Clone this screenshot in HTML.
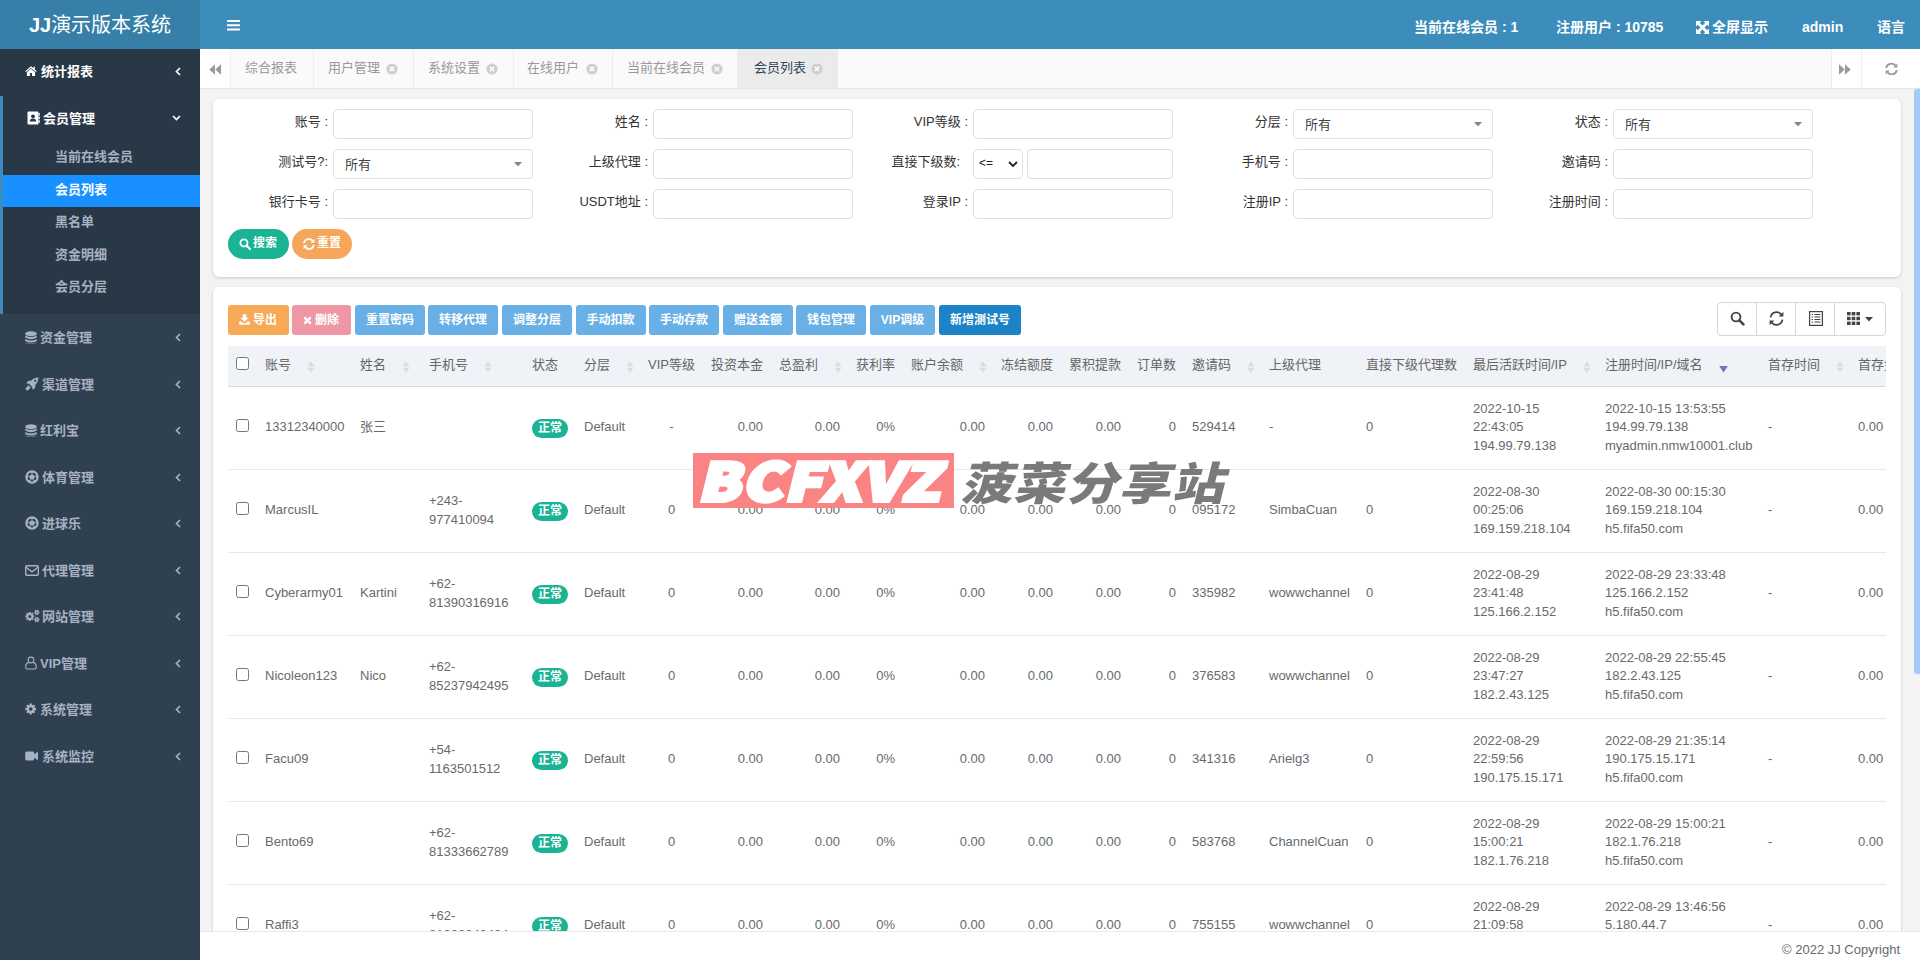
<!DOCTYPE html>
<html lang="zh-CN">
<head>
<meta charset="utf-8">
<title>JJ演示版本系统</title>
<style>
*{box-sizing:border-box;margin:0;padding:0}
html,body{width:1920px;height:960px;overflow:hidden;background:#f3f3f4;font-family:"Liberation Sans","Noto Sans CJK SC",sans-serif;font-size:13px;color:#676a6c}
svg{display:block}
/* sidebar */
#side{position:absolute;left:0;top:0;width:200px;height:960px;background:#2f4050}
#logo{position:absolute;left:0;top:0;width:200px;height:49px;background:#367fa9;color:#fff;font-size:20px;line-height:50px;text-align:center}
#side .sec{position:absolute;left:0;top:49px;width:200px;height:265px;background:#293846}
#side .bar{position:absolute;left:0;top:96px;width:3px;height:218px;background:#3c8dbc}
.mi{position:absolute;left:0;width:200px;height:46px;line-height:46px;color:#a7b1c2;font-weight:bold;font-size:13px}
.mi .t{position:absolute;top:0.5px;white-space:nowrap}
.mi svg{position:absolute}
.mi.w{color:#fff}
.si{position:absolute;left:0;width:200px;height:32.5px;line-height:32px;color:#a7b1c2;font-weight:bold;padding-left:55px}
.si.act{background:#1890ff;color:#fff;left:3px;width:197px;padding-left:52px;margin-top:1px;height:32px;line-height:30px}
/* navbar */
#nav{position:absolute;left:200px;top:0;width:1720px;height:49px;background:#3c8dbc;color:#fff;font-weight:bold;font-size:14px;line-height:48px}
#nav span{position:absolute;top:3px;white-space:nowrap}
/* tabs */
#tabs{position:absolute;left:200px;top:49px;width:1720px;height:40px;background:#fafafa;border-bottom:1px solid #e5e5e6;font-size:13px;color:#999;line-height:38px}
#tabs .tb{position:absolute;top:0;height:39px;border-left:1px solid #eeeeef;white-space:nowrap}
#tabs .tb.act{background:#ebebec;color:#34465a}
/* scrollbar */
#sbar{position:absolute;left:1903px;top:89px;width:17px;height:842px;background:#f3f3f4}
#sthumb{position:absolute;left:1914px;top:89px;width:6px;height:585px;background:#a3cbf9;border-radius:3px 0 0 3px}
/* form panel */
#fpanel{position:absolute;left:213px;top:99px;width:1688px;height:178px;background:#fff;border-radius:6px;box-shadow:0 1px 3px rgba(0,0,0,.18)}
.fl{position:absolute;height:29px;line-height:25px;text-align:right;color:#333;white-space:nowrap}
.inp{position:absolute;width:200px;height:30px;border:1px solid #e0e0e0;border-radius:4px;background:#fff}
.sel{position:absolute;width:200px;height:30px;border:1px solid #e3e3e3;border-radius:4px;background:#fff;padding-left:11px;line-height:29px;color:#444}
.sel2{position:absolute;width:50px;height:30px;border:1px solid #e0e0e0;border-radius:4px;background:#fff;padding-left:5px;line-height:27px;color:#222;font-size:12px}
.pbtn{position:absolute;width:61px;height:30px;border-radius:15px;color:#fff;font-weight:bold;font-size:12px;line-height:29px}
/* table panel */
#tpanel{position:absolute;left:213px;top:287px;width:1688px;height:700px;background:#fff;border-radius:6px;box-shadow:0 1px 3px rgba(0,0,0,.18)}
.btn{position:absolute;top:18px;height:30px;border-radius:3px;color:#fff;font-weight:bold;font-size:12px;line-height:31px;text-align:center;white-space:nowrap}
.tg{position:absolute;width:169px;height:34px;border:1px solid #d6d6d6;border-radius:4px;background:#fff}
.tgb{position:absolute;top:0;height:32px;border-right:1px solid #d6d6d6}
#twrap{position:absolute;left:15px;top:59px;width:1658px;height:620px;overflow:hidden}
#tb{table-layout:fixed;border-collapse:collapse;width:1712px}
#tb th{height:40px;background:#eff2f7;border-bottom:1px solid #d8dadd;font-weight:normal;text-align:left;padding:0 8px;white-space:nowrap;color:#666;overflow:hidden}
#tb th .thi{position:relative;height:39px;line-height:37px}
#tb th .so{display:inline-block;margin-left:16px;vertical-align:middle;position:relative;top:1px}
#tb td{height:83px;border-bottom:1px solid #e7eaec;padding:0 8px;line-height:18.5px;vertical-align:middle;color:#676a6c;white-space:nowrap}
#tb td.r{text-align:right}
#tb td.c{text-align:center}
.cb{display:inline-block;width:13px;height:13px;border:1px solid #767676;border-radius:2.5px;background:#fff;vertical-align:middle;position:relative;top:-2px}
#tb th .cb{top:-3px}
.badge{display:inline-block;background:#1ab394;color:#fff;font-weight:bold;font-size:12px;height:19px;line-height:18px;padding:0 6px;border-radius:10px;position:relative;top:1px}
/* footer */
#foot{position:absolute;left:200px;top:931px;width:1720px;height:29px;background:#fff;border-top:1px solid #e7eaec;color:#676a6c;text-align:right;padding-right:20px;line-height:36px;font-size:13px}
/* watermark */
#wm{position:absolute;left:693px;top:453px;width:540px;height:56px}
#wm .red{position:absolute;left:0;top:0;width:261px;height:55px;background:#fa8383;overflow:hidden}
#wm .red span{position:absolute;left:10px;top:-14px;font-family:"Noto Sans CJK SC","Liberation Sans",sans-serif;font-weight:900;font-size:52px;line-height:80px;letter-spacing:1.5px;-webkit-text-stroke:4px #fff;transform:scaleX(1.17) skewX(-12deg);transform-origin:left center;color:#fff;white-space:nowrap}
#wm .cn{position:absolute;left:272px;top:-5.5px;font-family:"Noto Sans CJK SC","Liberation Sans",sans-serif;font-weight:900;font-size:45px;line-height:66px;color:#7a7a7a;white-space:nowrap;letter-spacing:0.5px;transform:scaleX(1.16) skewX(-12deg);transform-origin:left center}
</style>
</head>
<body>
<div id="side">
<div class="sec"></div><div class="bar"></div><div class="bar2"></div>
<div id="logo"><b>JJ</b>演示版本系统</div>
<div class="mi w" style="top:48px"><svg class="ic" style="left:25px;top:18px" width="12" height="10.3" viewBox="0 0 14 12"><path d="M7 0.3 L0.3 6 L1.2 7 L7 2.2 L12.8 7 L13.7 6 L11.5 4.1 V1 H9.8 V2.7 Z" fill="#ffffff"/><path d="M7 3.3 L2.2 7.3 V11.6 H5.8 V8.3 H8.2 V11.6 H11.8 V7.3 Z" fill="#ffffff"/></svg><span class="t" style="left:41px">统计报表</span><svg class="ar" style="left:175px;top:19px" width="6" height="9" viewBox="0 0 6 9"><path d="M5 1 L1.5 4.5 L5 8" fill="none" stroke="#ffffff" stroke-width="1.7"/></svg></div>
<div class="mi w" style="top:95px"><svg class="ic" style="left:27px;top:16px" width="13" height="14" viewBox="0 0 13 14"><path d="M1.5 0.5 H10.5 Q11.5 0.5 11.5 1.5 V12.5 Q11.5 13.5 10.5 13.5 H1.5 Q0.5 13.5 0.5 12.5 V1.5 Q0.5 0.5 1.5 0.5 Z" fill="#ffffff"/><rect x="11.5" y="2" width="1.3" height="2.6" fill="#ffffff"/><rect x="11.5" y="5.6" width="1.3" height="2.6" fill="#ffffff"/><rect x="11.5" y="9.2" width="1.3" height="2.6" fill="#ffffff"/><circle cx="6" cy="5.3" r="1.9" fill="#293846"/><path d="M2.8 10.6 Q2.8 7.6 6 7.6 Q9.2 7.6 9.2 10.6 Z" fill="#293846"/></svg><span class="t" style="left:43px">会员管理</span><svg class="ar" style="left:172px;top:20px" width="9" height="6" viewBox="0 0 9 6"><path d="M1 1 L4.5 4.5 L8 1" fill="none" stroke="#ffffff" stroke-width="1.7"/></svg></div>
<div class="mi" style="top:314px"><svg class="ic" style="left:25px;top:17px" width="12" height="13" viewBox="0 0 12 13"><ellipse cx="6" cy="2.7" rx="5.8" ry="2.5" fill="#a7b1c2"/><path d="M0.2 4.6 Q6 7.6 11.8 4.6 V6.6 Q6 9.8 0.2 6.6 Z" fill="#a7b1c2"/><path d="M0.2 8 Q6 11 11.8 8 V10 Q6 13.2 0.2 10 Z" fill="#a7b1c2"/><path d="M0.2 11.2 Q6 14.2 11.8 11.2 Q11 13 6 13 Q1 13 0.2 11.2 Z" fill="#a7b1c2"/></svg><span class="t" style="left:40px">资金管理</span><svg class="ar" style="left:175px;top:19px" width="6" height="9" viewBox="0 0 6 9"><path d="M5 1 L1.5 4.5 L5 8" fill="none" stroke="#a7b1c2" stroke-width="1.7"/></svg></div>
<div class="mi" style="top:361px"><svg class="ic" style="left:25px;top:16px" width="14" height="14" viewBox="0 0 14 14"><path d="M13.5 0.5 Q9 0.6 6.2 3.6 L3 3.9 L1.3 6.4 L3.9 6.8 L7.2 10.1 L7.6 12.7 L10.1 11 L10.4 7.8 Q13.4 5 13.5 0.5 Z M10.3 2.6 A1.1 1.1 0 1 1 10.29 2.6 Z" fill="#a7b1c2" fill-rule="evenodd"/><path d="M3.4 8.2 L0.6 11.2 L1 13 L2.8 13.4 L5.8 10.6 Z" fill="#a7b1c2"/></svg><span class="t" style="left:42px">渠道管理</span><svg class="ar" style="left:175px;top:19px" width="6" height="9" viewBox="0 0 6 9"><path d="M5 1 L1.5 4.5 L5 8" fill="none" stroke="#a7b1c2" stroke-width="1.7"/></svg></div>
<div class="mi" style="top:407px"><svg class="ic" style="left:25px;top:17px" width="12" height="13" viewBox="0 0 12 13"><ellipse cx="6" cy="2.7" rx="5.8" ry="2.5" fill="#a7b1c2"/><path d="M0.2 4.6 Q6 7.6 11.8 4.6 V6.6 Q6 9.8 0.2 6.6 Z" fill="#a7b1c2"/><path d="M0.2 8 Q6 11 11.8 8 V10 Q6 13.2 0.2 10 Z" fill="#a7b1c2"/><path d="M0.2 11.2 Q6 14.2 11.8 11.2 Q11 13 6 13 Q1 13 0.2 11.2 Z" fill="#a7b1c2"/></svg><span class="t" style="left:40px">红利宝</span><svg class="ar" style="left:175px;top:19px" width="6" height="9" viewBox="0 0 6 9"><path d="M5 1 L1.5 4.5 L5 8" fill="none" stroke="#a7b1c2" stroke-width="1.7"/></svg></div>
<div class="mi" style="top:454px"><svg class="ic" style="left:25px;top:16px" width="14" height="14" viewBox="0 0 14 14"><circle cx="7" cy="7" r="5.7" fill="none" stroke="#a7b1c2" stroke-width="2"/><path d="M7 4 L10 6.2 L8.9 9.6 H5.1 L4 6.2 Z" fill="#a7b1c2"/><path d="M7 0.8 L9.2 2.2 L7 3.8 L4.8 2.2 Z M13 5 L12.8 8.2 L10.4 7.2 L10.9 4.8 Z M1 5 L3.1 4.8 L3.6 7.2 L1.2 8.2 Z M3.2 12 L4.2 9.8 L6.2 10.8 L5.8 13 Z M10.8 12 L8.2 13 L7.8 10.8 L9.8 9.8 Z" fill="#a7b1c2"/></svg><span class="t" style="left:42px">体育管理</span><svg class="ar" style="left:175px;top:19px" width="6" height="9" viewBox="0 0 6 9"><path d="M5 1 L1.5 4.5 L5 8" fill="none" stroke="#a7b1c2" stroke-width="1.7"/></svg></div>
<div class="mi" style="top:500px"><svg class="ic" style="left:25px;top:16px" width="14" height="14" viewBox="0 0 14 14"><circle cx="7" cy="7" r="5.7" fill="none" stroke="#a7b1c2" stroke-width="2"/><path d="M7 4 L10 6.2 L8.9 9.6 H5.1 L4 6.2 Z" fill="#a7b1c2"/><path d="M7 0.8 L9.2 2.2 L7 3.8 L4.8 2.2 Z M13 5 L12.8 8.2 L10.4 7.2 L10.9 4.8 Z M1 5 L3.1 4.8 L3.6 7.2 L1.2 8.2 Z M3.2 12 L4.2 9.8 L6.2 10.8 L5.8 13 Z M10.8 12 L8.2 13 L7.8 10.8 L9.8 9.8 Z" fill="#a7b1c2"/></svg><span class="t" style="left:42px">进球乐</span><svg class="ar" style="left:175px;top:19px" width="6" height="9" viewBox="0 0 6 9"><path d="M5 1 L1.5 4.5 L5 8" fill="none" stroke="#a7b1c2" stroke-width="1.7"/></svg></div>
<div class="mi" style="top:547px"><svg class="ic" style="left:25px;top:18px" width="14" height="11" viewBox="0 0 14 11"><rect x="0.7" y="0.7" width="12.6" height="9.6" rx="1.1" fill="none" stroke="#a7b1c2" stroke-width="1.4"/><path d="M1 2.2 L7 6.8 L13 2.2" fill="none" stroke="#a7b1c2" stroke-width="1.4"/></svg><span class="t" style="left:42px">代理管理</span><svg class="ar" style="left:175px;top:19px" width="6" height="9" viewBox="0 0 6 9"><path d="M5 1 L1.5 4.5 L5 8" fill="none" stroke="#a7b1c2" stroke-width="1.7"/></svg></div>
<div class="mi" style="top:593px"><svg class="ic" style="left:25px;top:16px" width="15" height="14" viewBox="0 0 15 14"><polygon points="7.97,6.48 9.30,6.43 9.30,8.37 7.97,8.32 7.69,8.99 8.66,9.90 7.30,11.26 6.39,10.29 5.72,10.57 5.77,11.90 3.83,11.90 3.88,10.57 3.21,10.29 2.30,11.26 0.94,9.90 1.91,8.99 1.63,8.32 0.30,8.37 0.30,6.43 1.63,6.48 1.91,5.81 0.94,4.90 2.30,3.54 3.21,4.51 3.88,4.23 3.83,2.90 5.77,2.90 5.72,4.23 6.39,4.51 7.30,3.54 8.66,4.90 7.69,5.81" fill="#a7b1c2"/><circle cx="4.8" cy="7.4" r="3.0999999999999996" fill="#a7b1c2"/><circle cx="4.8" cy="7.4" r="1.5" fill="#2f4050"/><polygon points="13.57,2.70 14.49,2.62 14.49,4.18 13.57,4.10 13.29,4.58 13.82,5.34 12.47,6.12 12.08,5.28 11.52,5.28 11.13,6.12 9.78,5.34 10.31,4.58 10.03,4.10 9.11,4.18 9.11,2.62 10.03,2.70 10.31,2.22 9.78,1.46 11.13,0.68 11.52,1.52 12.08,1.52 12.47,0.68 13.82,1.46 13.29,2.22" fill="#a7b1c2"/><circle cx="11.8" cy="3.4" r="1.7" fill="#a7b1c2"/><circle cx="11.8" cy="3.4" r="0.7" fill="#2f4050"/><polygon points="13.57,9.90 14.49,9.82 14.49,11.38 13.57,11.30 13.29,11.78 13.82,12.54 12.47,13.32 12.08,12.48 11.52,12.48 11.13,13.32 9.78,12.54 10.31,11.78 10.03,11.30 9.11,11.38 9.11,9.82 10.03,9.90 10.31,9.42 9.78,8.66 11.13,7.88 11.52,8.72 12.08,8.72 12.47,7.88 13.82,8.66 13.29,9.42" fill="#a7b1c2"/><circle cx="11.8" cy="10.6" r="1.7" fill="#a7b1c2"/><circle cx="11.8" cy="10.6" r="0.7" fill="#2f4050"/></svg><span class="t" style="left:42px">网站管理</span><svg class="ar" style="left:175px;top:19px" width="6" height="9" viewBox="0 0 6 9"><path d="M5 1 L1.5 4.5 L5 8" fill="none" stroke="#a7b1c2" stroke-width="1.7"/></svg></div>
<div class="mi" style="top:640px"><svg class="ic" style="left:25px;top:16px" width="12" height="14" viewBox="0 0 12 14"><circle cx="6" cy="4" r="2.9" fill="none" stroke="#a7b1c2" stroke-width="1.1"/><path d="M3.6 6.6 Q0.8 7.2 0.7 11 Q0.7 13 2.4 13 H9.6 Q11.3 13 11.3 11 Q11.2 7.2 8.4 6.6" fill="none" stroke="#a7b1c2" stroke-width="1.1"/></svg><span class="t" style="left:40px">VIP管理</span><svg class="ar" style="left:175px;top:19px" width="6" height="9" viewBox="0 0 6 9"><path d="M5 1 L1.5 4.5 L5 8" fill="none" stroke="#a7b1c2" stroke-width="1.7"/></svg></div>
<div class="mi" style="top:686px"><svg class="ic" style="left:25px;top:16px" width="12" height="14" viewBox="0 0 12 14"><polygon points="9.54,5.88 11.08,5.84 11.08,8.16 9.54,8.12 9.21,8.93 10.32,9.98 8.68,11.62 7.63,10.51 6.82,10.84 6.86,12.38 4.54,12.38 4.58,10.84 3.77,10.51 2.72,11.62 1.08,9.98 2.19,8.93 1.86,8.12 0.32,8.16 0.32,5.84 1.86,5.88 2.19,5.07 1.08,4.02 2.72,2.38 3.77,3.49 4.58,3.16 4.54,1.62 6.86,1.62 6.82,3.16 7.63,3.49 8.68,2.38 10.32,4.02 9.21,5.07" fill="#a7b1c2"/><circle cx="5.7" cy="7" r="3.9" fill="#a7b1c2"/><circle cx="5.7" cy="7" r="1.8" fill="#2f4050"/></svg><span class="t" style="left:40px">系统管理</span><svg class="ar" style="left:175px;top:19px" width="6" height="9" viewBox="0 0 6 9"><path d="M5 1 L1.5 4.5 L5 8" fill="none" stroke="#a7b1c2" stroke-width="1.7"/></svg></div>
<div class="mi" style="top:733px"><svg class="ic" style="left:25px;top:18px" width="14" height="10" viewBox="0 0 14 10"><rect x="0.2" y="0.6" width="9" height="8.8" rx="1.4" fill="#a7b1c2"/><path d="M8.8 3.4 L13 0.8 V9.2 L8.8 6.6 Z" fill="#a7b1c2"/></svg><span class="t" style="left:42px">系统监控</span><svg class="ar" style="left:175px;top:19px" width="6" height="9" viewBox="0 0 6 9"><path d="M5 1 L1.5 4.5 L5 8" fill="none" stroke="#a7b1c2" stroke-width="1.7"/></svg></div>
<div class="si" style="top:140.75px">当前在线会员</div>
<div class="si act" style="top:173.75px">会员列表</div>
<div class="si" style="top:205.75px">黑名单</div>
<div class="si" style="top:238.75px">资金明细</div>
<div class="si" style="top:270.75px">会员分层</div>
</div>
<div id="nav">
<svg style="position:absolute;left:27px;top:20px" width="13" height="10.5" viewBox="0 0 13 11" preserveAspectRatio="none"><rect x="0" y="0" width="13" height="2.2" rx="0.6" fill="#fff"/><rect x="0" y="4.4" width="13" height="2.2" rx="0.6" fill="#fff"/><rect x="0" y="8.8" width="13" height="2.2" rx="0.6" fill="#fff"/></svg>
<span style="left:1214px">当前在线会员 : 1</span>
<span style="left:1356px">注册用户 : 10785</span>
<svg style="position:absolute;left:1496px;top:21px" width="13" height="13" viewBox="0 0 13 13"><g fill="#fff"><path d="M0 0 H5.6 L0 5.6 Z M13 0 V5.6 L7.4 0 Z M0 13 V7.4 L5.6 13 Z M13 13 H7.4 L13 7.4 Z"/></g><path d="M2.2 2.2 L10.8 10.8 M10.8 2.2 L2.2 10.8" stroke="#fff" stroke-width="2.8"/></svg>
<span style="left:1512px">全屏显示</span>
<span style="left:1602px">admin</span>
<span style="left:1677px">语言</span>
</div>
<div id="tabs">
<div class="tb" style="left:0;width:30px;background:#fff;border-left:0"><svg style="position:absolute;left:9px;top:15px" width="12" height="11" viewBox="0 0 12 11"><path d="M6 0.3 V10.7 L0.3 5.5 Z M12 0.3 V10.7 L6.3 5.5 Z" fill="#999"/></svg></div>
<div class="tb" style="left:30px;width:83px"><span style="position:absolute;left:14px">综合报表</span></div>
<div class="tb" style="left:113px;width:100px"><span style="position:absolute;left:14px">用户管理</span><svg style="position:absolute;left:72px;top:14px" width="12" height="12" viewBox="0 0 12 12"><circle cx="6" cy="6" r="5.6" fill="#cfcfcf"/><path d="M3.9 3.9 L8.1 8.1 M8.1 3.9 L3.9 8.1" stroke="#fafafa" stroke-width="1.7"/></svg></div>
<div class="tb" style="left:212.5px;width:100px"><span style="position:absolute;left:14.5px">系统设置</span><svg style="position:absolute;left:72.5px;top:14px" width="12" height="12" viewBox="0 0 12 12"><circle cx="6" cy="6" r="5.6" fill="#cfcfcf"/><path d="M3.9 3.9 L8.1 8.1 M8.1 3.9 L3.9 8.1" stroke="#fafafa" stroke-width="1.7"/></svg></div>
<div class="tb" style="left:312.5px;width:100px"><span style="position:absolute;left:13.5px">在线用户</span><svg style="position:absolute;left:72.5px;top:14px" width="12" height="12" viewBox="0 0 12 12"><circle cx="6" cy="6" r="5.6" fill="#cfcfcf"/><path d="M3.9 3.9 L8.1 8.1 M8.1 3.9 L3.9 8.1" stroke="#fafafa" stroke-width="1.7"/></svg></div>
<div class="tb" style="left:412px;width:125px"><span style="position:absolute;left:14px">当前在线会员</span><svg style="position:absolute;left:98px;top:14px" width="12" height="12" viewBox="0 0 12 12"><circle cx="6" cy="6" r="5.6" fill="#cfcfcf"/><path d="M3.9 3.9 L8.1 8.1 M8.1 3.9 L3.9 8.1" stroke="#fafafa" stroke-width="1.7"/></svg></div>
<div class="tb act" style="left:537px;width:100.5px"><span style="position:absolute;left:16px">会员列表</span><svg style="position:absolute;left:73px;top:14px" width="12" height="12" viewBox="0 0 12 12"><circle cx="6" cy="6" r="5.6" fill="#cfcfcf"/><path d="M3.9 3.9 L8.1 8.1 M8.1 3.9 L3.9 8.1" stroke="#fafafa" stroke-width="1.7"/></svg></div>
<div class="tb" style="left:1631px;width:30px;background:#fff"><svg style="position:absolute;left:7px;top:15px" width="12" height="11" viewBox="0 0 12 11"><path d="M0 0.3 V10.7 L5.7 5.5 Z M6 0.3 V10.7 L11.7 5.5 Z" fill="#999"/></svg></div>
<div class="tb" style="left:1661px;width:59px;background:#fff"><svg style="position:absolute;left:23px;top:14px" width="13" height="12" viewBox="0 0 13 12"><path d="M1.2 5 A5.2 5.2 0 0 1 10.4 2.6" fill="none" stroke="#999" stroke-width="1.8"/><path d="M12.4 0.4 V4.6 H8.2 Z" fill="#999"/><path d="M11.8 7 A5.2 5.2 0 0 1 2.6 9.4" fill="none" stroke="#999" stroke-width="1.8"/><path d="M0.6 11.6 V7.4 H4.8 Z" fill="#999"/></svg></div>
</div>
<div id="sbar"></div><div id="sthumb"></div>
<div id="fpanel">
<label class="fl" style="left:-5px;top:10px;width:120px">账号 :</label><div class="inp" style="left:120px;top:10px"></div>
<label class="fl" style="left:-5px;top:50px;width:120px">测试号?:</label><div class="sel" style="left:120px;top:50px">所有<svg style="position:absolute;left:180px;top:12px" width="8" height="5" viewBox="0 0 8 5"><path d="M0 0 H8 L4 4.6 Z" fill="#888"/></svg></div>
<label class="fl" style="left:-5px;top:90px;width:120px">银行卡号 :</label><div class="inp" style="left:120px;top:90px"></div>
<label class="fl" style="left:315px;top:10px;width:120px">姓名 :</label><div class="inp" style="left:440px;top:10px"></div>
<label class="fl" style="left:315px;top:50px;width:120px">上级代理 :</label><div class="inp" style="left:440px;top:50px"></div>
<label class="fl" style="left:315px;top:90px;width:120px">USDT地址 :</label><div class="inp" style="left:440px;top:90px"></div>
<label class="fl" style="left:635px;top:10px;width:120px">VIP等级 :</label><div class="inp" style="left:760px;top:10px"></div>
<label class="fl" style="left:627px;top:50px;width:120px">直接下级数:</label><div class="sel2" style="left:760px;top:50px">&lt;=<svg style="position:absolute;left:34px;top:11px" width="10" height="7" viewBox="0 0 10 7"><path d="M1 1 L5 5 L9 1" fill="none" stroke="#222" stroke-width="1.8"/></svg></div><div class="inp" style="left:814px;top:50px;width:146px"></div>
<label class="fl" style="left:635px;top:90px;width:120px">登录IP :</label><div class="inp" style="left:760px;top:90px"></div>
<label class="fl" style="left:955px;top:10px;width:120px">分层 :</label><div class="sel" style="left:1080px;top:10px">所有<svg style="position:absolute;left:180px;top:12px" width="8" height="5" viewBox="0 0 8 5"><path d="M0 0 H8 L4 4.6 Z" fill="#888"/></svg></div>
<label class="fl" style="left:955px;top:50px;width:120px">手机号 :</label><div class="inp" style="left:1080px;top:50px"></div>
<label class="fl" style="left:955px;top:90px;width:120px">注册IP :</label><div class="inp" style="left:1080px;top:90px"></div>
<label class="fl" style="left:1275px;top:10px;width:120px">状态 :</label><div class="sel" style="left:1400px;top:10px">所有<svg style="position:absolute;left:180px;top:12px" width="8" height="5" viewBox="0 0 8 5"><path d="M0 0 H8 L4 4.6 Z" fill="#888"/></svg></div>
<label class="fl" style="left:1275px;top:50px;width:120px">邀请码 :</label><div class="inp" style="left:1400px;top:50px"></div>
<label class="fl" style="left:1275px;top:90px;width:120px">注册时间 :</label><div class="inp" style="left:1400px;top:90px"></div>
<div class="pbtn" style="left:15px;top:130px;background:#1ab394"><svg style="position:absolute;left:11px;top:9px" width="12" height="12" viewBox="0 0 12 12"><circle cx="4.9" cy="4.9" r="3.6" fill="none" stroke="#fff" stroke-width="1.8"/><path d="M7.6 7.6 L11 11" stroke="#fff" stroke-width="2.2" stroke-linecap="round"/></svg><span style="position:absolute;left:25px">搜索</span></div>
<div class="pbtn" style="left:79px;top:130px;width:60px;background:#f5a65b"><svg style="position:absolute;left:11px;top:9px" width="12" height="12" viewBox="0 0 13 12"><path d="M1.2 5 A5.2 5.2 0 0 1 10.4 2.6" fill="none" stroke="#fff" stroke-width="2"/><path d="M12.4 0.4 V4.6 H8.2 Z" fill="#fff"/><path d="M11.8 7 A5.2 5.2 0 0 1 2.6 9.4" fill="none" stroke="#fff" stroke-width="2"/><path d="M0.6 11.6 V7.4 H4.8 Z" fill="#fff"/></svg><span style="position:absolute;left:25px">重置</span></div>
</div>
<div id="tpanel">
<div class="btn" style="left:15px;width:61px;background:#f6a957"><svg style="position:absolute;left:11px;top:9px" width="11" height="11" viewBox="0 0 11 11"><path d="M3.8 0.3 H7.2 V3.8 H9.6 L5.5 7.8 L1.4 3.8 H3.8 Z" fill="#fff"/><path d="M0.2 7.6 H2.6 L4.4 9.2 H6.6 L8.4 7.6 H10.8 V10.8 H0.2 Z" fill="#fff"/></svg><span style="position:absolute;left:25px">导出</span></div>
<div class="btn" style="left:79px;width:59px;background:#f097a5"><svg style="position:absolute;left:11px;top:11px" width="9" height="9" viewBox="0 0 9 9"><path d="M1.3 1.3 L7.7 7.7 M7.7 1.3 L1.3 7.7" stroke="#fff" stroke-width="2.4"/></svg><span style="position:absolute;left:23px">删除</span></div>
<div class="btn" style="left:142px;width:70px;background:#68b0e5">重置密码</div>
<div class="btn" style="left:215px;width:70px;background:#68b0e5">转移代理</div>
<div class="btn" style="left:289px;width:70px;background:#68b0e5">调整分层</div>
<div class="btn" style="left:362.5px;width:70px;background:#68b0e5">手动扣款</div>
<div class="btn" style="left:436px;width:70px;background:#68b0e5">手动存款</div>
<div class="btn" style="left:510px;width:70px;background:#68b0e5">赠送金额</div>
<div class="btn" style="left:583px;width:70px;background:#68b0e5">钱包管理</div>
<div class="btn" style="left:657px;width:65px;background:#68b0e5">VIP调级</div>
<div class="btn" style="left:726px;width:82px;background:#1c84c6">新增测试号</div>
<div class="tg" style="left:1504px;top:15px"><div class="tgb" style="left:0;width:39px"><svg style="position:absolute;left:12px;top:8px" width="15" height="15" viewBox="0 0 15 15"><circle cx="6" cy="6" r="4.4" fill="none" stroke="#444" stroke-width="1.9"/><path d="M9.4 9.4 L13.4 13.4" stroke="#444" stroke-width="2.6" stroke-linecap="round"/></svg></div><div class="tgb" style="left:39px;width:39px"><svg style="position:absolute;left:12px;top:8px" width="15" height="15" viewBox="0 0 15 15"><path d="M1.6 6.4 A6 6 0 0 1 12.2 3.4" fill="none" stroke="#444" stroke-width="1.7"/><path d="M14.4 0.8 V5.6 H9.6 Z" fill="#444"/><path d="M13.4 8.6 A6 6 0 0 1 2.8 11.6" fill="none" stroke="#444" stroke-width="1.7"/><path d="M0.6 14.2 V9.4 H5.4 Z" fill="#444"/></svg></div><div class="tgb" style="left:78px;width:39px"><svg style="position:absolute;left:13px;top:8px" width="14" height="15" viewBox="0 0 14 15"><rect x="0.6" y="0.6" width="12.8" height="13.8" fill="none" stroke="#444" stroke-width="1.2"/><path d="M2.6 3.5 H4 M5.4 3.5 H11.4 M2.6 6 H4 M5.4 6 H11.4 M2.6 8.5 H4 M5.4 8.5 H11.4 M2.6 11 H4 M5.4 11 H11.4" stroke="#444" stroke-width="1.2"/></svg></div><div class="tgb" style="left:117px;width:52px;border-right:0"><svg style="position:absolute;left:12px;top:9px" width="13" height="13" viewBox="0 0 13 13"><g fill="#444"><rect x="0" y="0" width="3.6" height="3.4"/><rect x="4.7" y="0" width="3.6" height="3.4"/><rect x="9.4" y="0" width="3.6" height="3.4"/><rect x="0" y="4.8" width="3.6" height="3.4"/><rect x="4.7" y="4.8" width="3.6" height="3.4"/><rect x="9.4" y="4.8" width="3.6" height="3.4"/><rect x="0" y="9.6" width="3.6" height="3.4"/><rect x="4.7" y="9.6" width="3.6" height="3.4"/><rect x="9.4" y="9.6" width="3.6" height="3.4"/></g></svg><svg style="position:absolute;left:30px;top:14px" width="8" height="5" viewBox="0 0 8 5"><path d="M0 0 H8 L4 4.4 Z" fill="#444"/></svg></div></div>
<div id="twrap"><table id="tb"><colgroup><col style="width:29px"><col style="width:95px"><col style="width:69px"><col style="width:103px"><col style="width:52px"><col style="width:64px"><col style="width:63px"><col style="width:68px"><col style="width:77px"><col style="width:55px"><col style="width:90px"><col style="width:68px"><col style="width:68px"><col style="width:55px"><col style="width:77px"><col style="width:97px"><col style="width:107px"><col style="width:132px"><col style="width:163px"><col style="width:90px"><col style="width:90px"></colgroup>
<thead><tr><th><span class="cb"></span></th><th><div class="thi">账号<svg class="so" width="8" height="12" viewBox="0 0 8 12"><path d="M4 0.3 L7.6 5.2 H0.4 Z M4 11.7 L0.4 6.8 H7.6 Z" fill="#d9dce1"/></svg></div></th><th><div class="thi">姓名<svg class="so" width="8" height="12" viewBox="0 0 8 12"><path d="M4 0.3 L7.6 5.2 H0.4 Z M4 11.7 L0.4 6.8 H7.6 Z" fill="#d9dce1"/></svg></div></th><th><div class="thi">手机号<svg class="so" width="8" height="12" viewBox="0 0 8 12"><path d="M4 0.3 L7.6 5.2 H0.4 Z M4 11.7 L0.4 6.8 H7.6 Z" fill="#d9dce1"/></svg></div></th><th><div class="thi">状态</div></th><th><div class="thi">分层<svg class="so" width="8" height="12" viewBox="0 0 8 12"><path d="M4 0.3 L7.6 5.2 H0.4 Z M4 11.7 L0.4 6.8 H7.6 Z" fill="#d9dce1"/></svg></div></th><th><div class="thi">VIP等级</div></th><th><div class="thi">投资本金</div></th><th><div class="thi">总盈利<svg class="so" width="8" height="12" viewBox="0 0 8 12"><path d="M4 0.3 L7.6 5.2 H0.4 Z M4 11.7 L0.4 6.8 H7.6 Z" fill="#d9dce1"/></svg></div></th><th><div class="thi">获利率</div></th><th><div class="thi">账户余额<svg class="so" width="8" height="12" viewBox="0 0 8 12"><path d="M4 0.3 L7.6 5.2 H0.4 Z M4 11.7 L0.4 6.8 H7.6 Z" fill="#d9dce1"/></svg></div></th><th><div class="thi">冻结额度</div></th><th><div class="thi">累积提款</div></th><th><div class="thi">订单数</div></th><th><div class="thi">邀请码<svg class="so" width="8" height="12" viewBox="0 0 8 12"><path d="M4 0.3 L7.6 5.2 H0.4 Z M4 11.7 L0.4 6.8 H7.6 Z" fill="#d9dce1"/></svg></div></th><th><div class="thi">上级代理</div></th><th><div class="thi">直接下级代理数</div></th><th><div class="thi">最后活跃时间/IP<svg class="so" width="8" height="12" viewBox="0 0 8 12"><path d="M4 0.3 L7.6 5.2 H0.4 Z M4 11.7 L0.4 6.8 H7.6 Z" fill="#d9dce1"/></svg></div></th><th><div class="thi">注册时间/IP/域名<svg class="so" width="9" height="12" viewBox="0 0 9 12"><path d="M0.2 5 H8.8 L4.5 11.4 Z" fill="#776fc4"/></svg></div></th><th><div class="thi">首存时间<svg class="so" width="8" height="12" viewBox="0 0 8 12"><path d="M4 0.3 L7.6 5.2 H0.4 Z M4 11.7 L0.4 6.8 H7.6 Z" fill="#d9dce1"/></svg></div></th><th><div class="thi">首存金额</div></th></tr></thead>
<tbody>
<tr><td><span class="cb"></span></td><td>13312340000</td><td>张三</td><td></td><td><span class="badge">正常</span></td><td>Default</td><td class="c">-</td><td class="r">0.00</td><td class="r">0.00</td><td class="r">0%</td><td class="r">0.00</td><td class="r">0.00</td><td class="r">0.00</td><td class="r">0</td><td>529414</td><td>-</td><td>0</td><td>2022-10-15<br>22:43:05<br>194.99.79.138</td><td>2022-10-15 13:53:55<br>194.99.79.138<br>myadmin.nmw10001.club</td><td>-</td><td>0.00</td></tr>
<tr><td><span class="cb"></span></td><td>MarcusIL</td><td></td><td>+243-<br>977410094</td><td><span class="badge">正常</span></td><td>Default</td><td class="c">0</td><td class="r">0.00</td><td class="r">0.00</td><td class="r">0%</td><td class="r">0.00</td><td class="r">0.00</td><td class="r">0.00</td><td class="r">0</td><td>095172</td><td>SimbaCuan</td><td>0</td><td>2022-08-30<br>00:25:06<br>169.159.218.104</td><td>2022-08-30 00:15:30<br>169.159.218.104<br>h5.fifa50.com</td><td>-</td><td>0.00</td></tr>
<tr><td><span class="cb"></span></td><td>Cyberarmy01</td><td>Kartini</td><td>+62-<br>81390316916</td><td><span class="badge">正常</span></td><td>Default</td><td class="c">0</td><td class="r">0.00</td><td class="r">0.00</td><td class="r">0%</td><td class="r">0.00</td><td class="r">0.00</td><td class="r">0.00</td><td class="r">0</td><td>335982</td><td>wowwchannel</td><td>0</td><td>2022-08-29<br>23:41:48<br>125.166.2.152</td><td>2022-08-29 23:33:48<br>125.166.2.152<br>h5.fifa50.com</td><td>-</td><td>0.00</td></tr>
<tr><td><span class="cb"></span></td><td>Nicoleon123</td><td>Nico</td><td>+62-<br>85237942495</td><td><span class="badge">正常</span></td><td>Default</td><td class="c">0</td><td class="r">0.00</td><td class="r">0.00</td><td class="r">0%</td><td class="r">0.00</td><td class="r">0.00</td><td class="r">0.00</td><td class="r">0</td><td>376583</td><td>wowwchannel</td><td>0</td><td>2022-08-29<br>23:47:27<br>182.2.43.125</td><td>2022-08-29 22:55:45<br>182.2.43.125<br>h5.fifa50.com</td><td>-</td><td>0.00</td></tr>
<tr><td><span class="cb"></span></td><td>Facu09</td><td></td><td>+54-<br>1163501512</td><td><span class="badge">正常</span></td><td>Default</td><td class="c">0</td><td class="r">0.00</td><td class="r">0.00</td><td class="r">0%</td><td class="r">0.00</td><td class="r">0.00</td><td class="r">0.00</td><td class="r">0</td><td>341316</td><td>Arielg3</td><td>0</td><td>2022-08-29<br>22:59:56<br>190.175.15.171</td><td>2022-08-29 21:35:14<br>190.175.15.171<br>h5.fifa00.com</td><td>-</td><td>0.00</td></tr>
<tr><td><span class="cb"></span></td><td>Bento69</td><td></td><td>+62-<br>81333662789</td><td><span class="badge">正常</span></td><td>Default</td><td class="c">0</td><td class="r">0.00</td><td class="r">0.00</td><td class="r">0%</td><td class="r">0.00</td><td class="r">0.00</td><td class="r">0.00</td><td class="r">0</td><td>583768</td><td>ChannelCuan</td><td>0</td><td>2022-08-29<br>15:00:21<br>182.1.76.218</td><td>2022-08-29 15:00:21<br>182.1.76.218<br>h5.fifa50.com</td><td>-</td><td>0.00</td></tr>
<tr><td><span class="cb"></span></td><td>Raffi3</td><td></td><td>+62-<br>81332040424</td><td><span class="badge">正常</span></td><td>Default</td><td class="c">0</td><td class="r">0.00</td><td class="r">0.00</td><td class="r">0%</td><td class="r">0.00</td><td class="r">0.00</td><td class="r">0.00</td><td class="r">0</td><td>755155</td><td>wowwchannel</td><td>0</td><td>2022-08-29<br>21:09:58<br>5.180.44.7</td><td>2022-08-29 13:46:56<br>5.180.44.7<br>h5.fifa50.com</td><td>-</td><td>0.00</td></tr>
</tbody></table></div>
</div>
<div id="wm"><div class="red"><span>BCFXVZ</span></div><div class="cn">菠菜分享站</div></div>
<div id="foot">© 2022 JJ Copyright</div>
</body>
</html>
